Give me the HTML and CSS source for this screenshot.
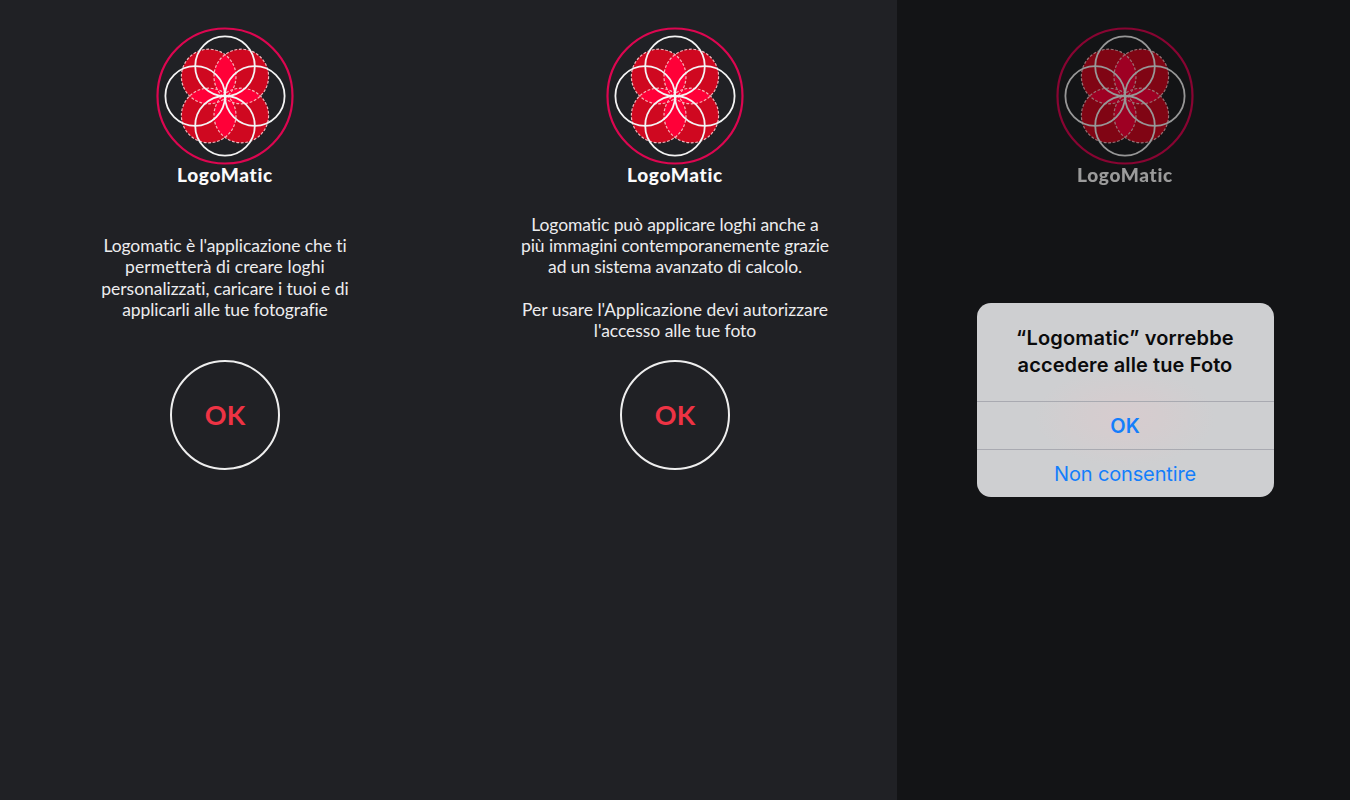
FILE: index.html
```html
<!DOCTYPE html>
<html lang="it">
<head>
<meta charset="utf-8">
<title>LogoMatic</title>
<link rel="stylesheet" href="styles.css">
</head>
<body>
<svg class="defs" width="0" height="0" aria-hidden="true">
  <symbol id="logo" viewBox="0 0 140 140">
    <g fill="#cf0820">
      <circle cx="53.7" cy="50.5" r="27.3"/><circle cx="86.3" cy="50.5" r="27.3"/>
      <circle cx="53.7" cy="89.5" r="27.3"/><circle cx="86.3" cy="89.5" r="27.3"/>
    </g>
    <g fill="#ff0038">
      <path d="M70 28.6A27.3 27.3 0 0 1 70 72.4A27.3 27.3 0 0 1 70 28.6Z"/>
      <path d="M70 67.6A27.3 27.3 0 0 1 70 111.4A27.3 27.3 0 0 1 70 67.6Z"/>
      <path d="M34.6 70A27.3 27.3 0 0 1 72.8 70A27.3 27.3 0 0 1 34.6 70Z"/>
      <path d="M67.2 70A27.3 27.3 0 0 1 105.4 70A27.3 27.3 0 0 1 67.2 70Z"/>
    </g>
    <g fill="none" stroke="#f5b5bb" stroke-width="1.2" stroke-dasharray="2.8 1.7">
      <circle cx="53.7" cy="50.5" r="27.3"/><circle cx="86.3" cy="50.5" r="27.3"/>
      <circle cx="53.7" cy="89.5" r="27.3"/><circle cx="86.3" cy="89.5" r="27.3"/>
    </g>
    <g fill="none" stroke="#f4f4f4" stroke-width="1.8">
      <circle cx="70" cy="40.2" r="29.8"/><circle cx="70" cy="99.8" r="29.8"/>
      <circle cx="40.2" cy="70" r="29.8"/><circle cx="99.8" cy="70" r="29.8"/>
    </g>
    <circle cx="70" cy="70" r="67.5" fill="none" stroke="#dc0650" stroke-width="2.2"/>
  </symbol>
</svg>
<main class="screens">
  <section class="screen">
    <svg class="logo"><use href="#logo"/></svg>
    <h1 class="brand">LogoMatic</h1>
    <div class="copy">
      <p class="line a1">Logomatic è l'applicazione che ti</p>
      <p class="line a2">permetterà di creare loghi</p>
      <p class="line a3">personalizzati, caricare i tuoi e di</p>
      <p class="line a4">applicarli alle tue fotografie</p>
    </div>
    <button class="round">OK</button>
  </section>
  <section class="screen">
    <svg class="logo"><use href="#logo"/></svg>
    <h1 class="brand">LogoMatic</h1>
    <div class="copy">
      <p class="line b1">Logomatic può applicare loghi anche a</p>
      <p class="line b2">più immagini contemporanemente grazie</p>
      <p class="line b3">ad un sistema avanzato di calcolo.</p>
      <p class="line">&nbsp;</p>
      <p class="line b4">Per usare l'Applicazione devi autorizzare</p>
      <p class="line b5">l'accesso alle tue foto</p>
    </div>
    <button class="round">OK</button>
  </section>
  <section class="screen dimmed">
    <div class="behind">
      <svg class="logo"><use href="#logo"/></svg>
      <h1 class="brand">LogoMatic</h1>
    </div>
    <div class="alert">
      <h2 class="title"><span class="t1">“Logomatic” vorrebbe</span><span class="t2">accedere alle tue Foto</span></h2>
      <button class="action strong">OK</button>
      <button class="action deny">Non consentire</button>
    </div>
  </section>
</main>
</body>
</html>
```

FILE: styles.css
```css
* { box-sizing: border-box; }
body { margin: 0; background: #202125; }
.defs { display: block; }
.screens { display: grid; grid-template-columns: repeat(3, 450px); height: 800px; overflow: hidden; }
.screen { display: flex; flex-direction: column; align-items: center; padding-top: 25.5px; }
.logo { display: block; width: 140px; height: 140px; flex: none; }
.brand { margin: -3px 0 0; height: 24px; font: 900 19px/24px Lato, sans-serif; letter-spacing: .7px; font-variant-ligatures: none; color: #fafafa; text-align: center; }
.copy { height: 173.5px; padding-top: 8.6px; display: flex; flex-direction: column; justify-content: center; }
.line { margin: 0; font: 400 17.5px/21.33px Lato, sans-serif; font-variant-ligatures: none; color: #ececee; text-align: center; white-space: nowrap; }
.a1 { letter-spacing: -.09px; }
.a2 { letter-spacing: .08px; }
.a3 { letter-spacing: -.03px; }
.a4 { letter-spacing: -.1px; }
.b1 { letter-spacing: -.11px; }
.b2 { letter-spacing: -.1px; }
.b3 { letter-spacing: -.13px; }
.b5 { letter-spacing: -.05px; }
.round { width: 110px; height: 110px; padding: 0; border: 2px solid #eee; border-radius: 50%; background: none; color: #ee3344; font: 700 27px/106px Lato, sans-serif; }
.dimmed { margin-left: -3px; padding-left: 3px; background: #131416; }
.behind { filter: brightness(.62); }
.alert { width: 297px; height: 194px; margin-top: 116.5px; border-radius: 14px; overflow: hidden; display: flex; flex-direction: column;
  background: radial-gradient(ellipse 90px 50px at 148px 114px, #d7cccf 0%, #d4cdcf 40%, #cecfd1 100%); }
.title { margin: 0; height: 97.6px; flex: none; padding-top: 22px; font: 600 20px/26.5px Inter, sans-serif; color: #0b0b0c; text-align: center; }
.title span { display: block; white-space: nowrap; }
.t1 { letter-spacing: .18px; }
.t2 { letter-spacing: .1px; }
.action { height: 48.6px; flex: none; padding: 0; border: 0; border-top: 1px solid #a9aab1; background: none; color: #147efb; font: 400 20px/48px Inter, sans-serif; }
.strong { font-weight: 600; }
.deny { letter-spacing: -.15px; }
```
